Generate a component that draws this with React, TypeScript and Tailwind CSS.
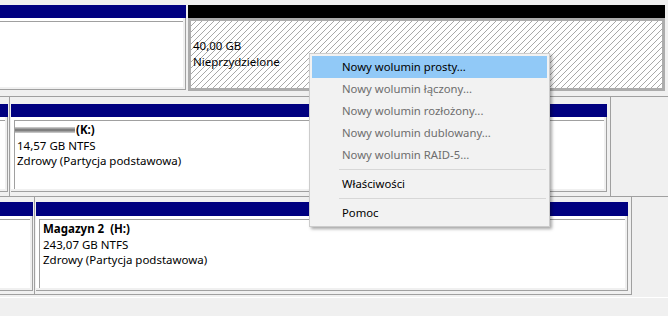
import type { ReactNode } from "react";

interface PartitionProps {
  className?: string;
  headerClass?: string;
  bodyClass?: string;
  cut?: boolean;
  children?: ReactNode;
}

// cut = partition starts left of the visible area, so no left inset line
function Partition({ className = "", headerClass = "h-[13px]", bodyClass = "", cut = false, children }: PartitionProps) {
  return (
    <div className={`flex flex-col ${className}`}>
      <div className={`shrink-0 bg-[#000080] ${headerClass}`} />
      <div className="flex flex-1 flex-col border-r border-b border-[#a0a0a0]">
        <div className={`mr-[2px] mb-[2px] flex flex-1 flex-col bg-white pt-[3px] ${cut ? "" : "pl-[3px]"}`}>
          <div className={`flex-1 border-t border-[#a0a0a0] ${cut ? "" : "border-l"} ${bodyClass}`}>{children}</div>
        </div>
      </div>
    </div>
  );
}

const menuItems = [
  { label: "Nowy wolumin prosty...", active: true },
  { label: "Nowy wolumin łączony...", disabled: true },
  { label: "Nowy wolumin rozłożony...", disabled: true },
  { label: "Nowy wolumin dublowany...", disabled: true },
  { label: "Nowy wolumin RAID-5...", disabled: true },
  { sep: true },
  { label: "Właściwości" },
  { sep: true },
  { label: "Pomoc" },
];

function ContextMenu() {
  return (
    <div className="absolute left-[309px] top-[53px] w-[241px] border border-[#cccccc] bg-[#f2f2f2] p-[2px] font-['Noto_Sans',sans-serif] text-[11.3px] shadow-[2px_2px_3px_rgba(0,0,0,0.35)]">
      {menuItems.map((item, i) =>
        item.sep ? (
          <div key={i} className="flex h-[7px] items-center pl-[27px] pr-[1px]">
            <div className="h-px flex-1 bg-[#d7d7d7]" />
          </div>
        ) : (
          <div
            key={i}
            className={`flex h-[22px] items-center pl-[30px] ${item.active ? "bg-[#91c9f7]" : ""} ${
              item.disabled ? "text-[#6d6d6d]" : "text-black"
            }`}
          >
            {item.label}
          </div>
        )
      )}
    </div>
  );
}

export default function App() {
  return (
    <div className="relative h-[316px] w-[668px] overflow-hidden bg-[#f0f0f0] font-['Noto_Sans',sans-serif] text-[11.5px] leading-[15.5px] text-black">
      {/* row 1 */}
      <div className="flex h-[97px] items-start border-b border-[#a0a0a0] pt-[5px]">
        <Partition className="h-[85px] w-[186px]" cut />
        <div className="ml-[2px] flex h-[86px] w-[477px] flex-col">
          <div className="h-[13px] shrink-0 bg-black" />
          <div className="flex-1 border-[3px] border-[#acacac] bg-[repeating-linear-gradient(135deg,#ffffff_0px,#ffffff_3.2px,#a8a8a8_3.2px,#a8a8a8_4.24px)] pl-[2px] pt-[17px]">
            <div>40,00 GB</div>
            <div>Nieprzydzielone</div>
          </div>
        </div>
      </div>

      {/* row 2 */}
      <div className="flex h-[100px] border-b border-[#a0a0a0]">
        <div className="w-[10px] border-r border-[#a0a0a0] pt-[7px]">
          <Partition className="h-[88px] w-[8px]" cut />
        </div>
        <div className="w-[601px] border-r border-[#a0a0a0] pt-[7px] pl-[1px]">
          <Partition className="h-[88px] w-[596px]" bodyClass="pl-[2px] pt-[1px]">
            <div className="flex items-center font-bold">
              <span className="-ml-[2px] mr-[1px] inline-block h-[6px] w-[60px] bg-[linear-gradient(to_bottom,#d4d4d4,#6e6e6e,#d4d4d4)] blur-[0.7px]" />
              (K:)
            </div>
            <div>14,57 GB NTFS</div>
            <div>Zdrowy (Partycja podstawowa)</div>
          </Partition>
        </div>
      </div>

      {/* row 3 */}
      <div className="flex h-[101px] flex-col">
        <div className="flex h-[98px]">
          <div className="w-[35px] border-r border-b border-[#a0a0a0] pt-[5px]">
            <Partition className="h-[89px] w-[33px]" headerClass="h-[14px]" cut />
          </div>
          <div className="w-[597px] border-r border-b border-[#a0a0a0] pt-[5px] pl-[1px]">
            <Partition className="h-[89px] w-[592px]" headerClass="h-[14px]" bodyClass="pl-[3px] pt-[1px]">
              <div className="whitespace-pre font-bold">Magazyn 2  (H:)</div>
              <div>243,07 GB NTFS</div>
              <div>Zdrowy (Partycja podstawowa)</div>
            </Partition>
          </div>
        </div>
        <div className="h-[2px]" />
        <div className="h-px bg-white" />
      </div>

      <ContextMenu />
    </div>
  );
}
